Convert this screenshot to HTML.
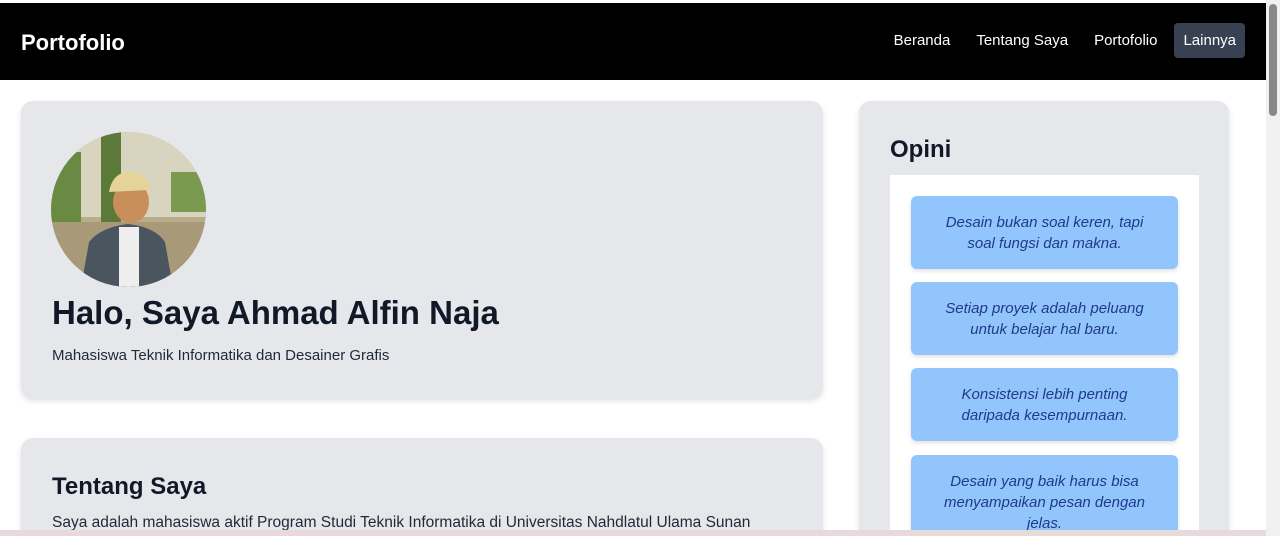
<!DOCTYPE html>
<html style="height:536px;overflow:hidden"><head><meta charset="utf-8"><style>
*{margin:0;padding:0;box-sizing:border-box}
body{width:1280px;height:536px;overflow:hidden;background:#fff;font-family:"Liberation Sans",sans-serif;position:relative;color:#111827}
.nav{position:absolute;top:3px;left:0;width:1266px;height:77px;background:#000}
.brand{position:absolute;left:21px;top:27px;color:#fff;font-weight:bold;font-size:22px}
.links{position:absolute;right:21px;top:20px;display:flex;gap:8px;align-items:center}
.links span{color:#fff;font-size:15px;padding:9px 9px;border-radius:4px}
.links .act{background:#374151}
.card{position:absolute;background:#e5e7eb;border-radius:12px;box-shadow:0 3px 6px rgba(0,0,0,.12)}
h1{position:absolute;left:52px;top:294px;font-size:33px;font-weight:bold;color:#111827}
.sub{position:absolute;left:52px;top:347px;font-size:15px;color:#1f2937}
h2{position:absolute;font-weight:bold;color:#111827}
.q{position:absolute;left:911px;width:267px;height:73px;background:#93c5fd;border-radius:6px;color:#1e3a8a;font-style:italic;font-size:15px;text-align:center;line-height:21px;padding-top:16px;padding-left:20px;padding-right:20px;box-shadow:0 2px 4px rgba(0,0,0,.12)}
.sb{position:absolute;right:0;top:0;width:14px;height:536px;background:#f1f1f1}
.th{position:absolute;right:3px;top:4px;width:8px;height:112px;background:#888;border-radius:4px}
.bot{position:absolute;left:0;top:530px;width:1266px;height:6px;background:#e8d9da}
</style></head><body>
<div class="nav"><div class="brand">Portofolio</div>
<div class="links"><span>Beranda</span><span>Tentang Saya</span><span>Portofolio</span><span class="act">Lainnya</span></div></div>
<div class="card" style="left:21px;top:101px;width:802px;height:297px"></div>
<svg style="position:absolute;left:51px;top:132px" width="155" height="155" viewBox="0 0 155 155">
<defs><clipPath id="c"><circle cx="77.5" cy="77.5" r="77.5"/></clipPath></defs>
<g clip-path="url(#c)">
<rect width="155" height="155" fill="#b8ad8a"/>
<rect x="0" y="0" width="155" height="85" fill="#d9d4c0"/>
<rect x="50" y="0" width="20" height="90" fill="#5b7a3a"/>
<rect x="0" y="20" width="30" height="70" fill="#6a8a44"/>
<rect x="120" y="40" width="35" height="40" fill="#7a9a50"/>
<rect x="0" y="90" width="155" height="65" fill="#a89a78"/>
<path d="M30 155 L38 110 Q50 95 77 92 Q104 95 114 110 L122 155Z" fill="#4b5560"/>
<rect x="68" y="95" width="20" height="60" fill="#eee"/>
<ellipse cx="80" cy="70" rx="18" ry="21" fill="#c98f5a"/>
<path d="M58 60 Q62 38 82 40 Q100 44 98 58 Z" fill="#e4d49a"/>
</g></svg>
<h1>Halo, Saya Ahmad Alfin Naja</h1>
<div class="sub">Mahasiswa Teknik Informatika dan Desainer Grafis</div>
<div class="card" style="left:21px;top:438px;width:802px;height:92px;border-radius:12px 12px 0 0"></div>
<h2 style="left:52px;top:473px;font-size:24px">Tentang Saya</h2>
<div class="sub" style="top:514px;font-size:15.5px">Saya adalah mahasiswa aktif Program Studi Teknik Informatika di Universitas Nahdlatul Ulama Sunan</div>
<div class="card" style="left:859px;top:101px;width:370px;height:429px;border-radius:12px 12px 0 0"></div>
<h2 style="left:890px;top:136px;font-size:24px">Opini</h2>
<div style="position:absolute;left:890px;top:175px;width:309px;height:355px;background:#fff"></div>
<div class="q" style="top:196px">Desain bukan soal keren, tapi soal fungsi dan makna.</div>
<div class="q" style="top:282px">Setiap proyek adalah peluang untuk belajar hal baru.</div>
<div class="q" style="top:368px">Konsistensi lebih penting daripada kesempurnaan.</div>
<div class="q" style="top:455px;height:75px;border-radius:6px 6px 0 0">Desain yang baik harus bisa menyampaikan pesan dengan jelas.</div>
<div class="bot"></div>
<div class="sb"><div class="th"></div></div>
</body></html>
